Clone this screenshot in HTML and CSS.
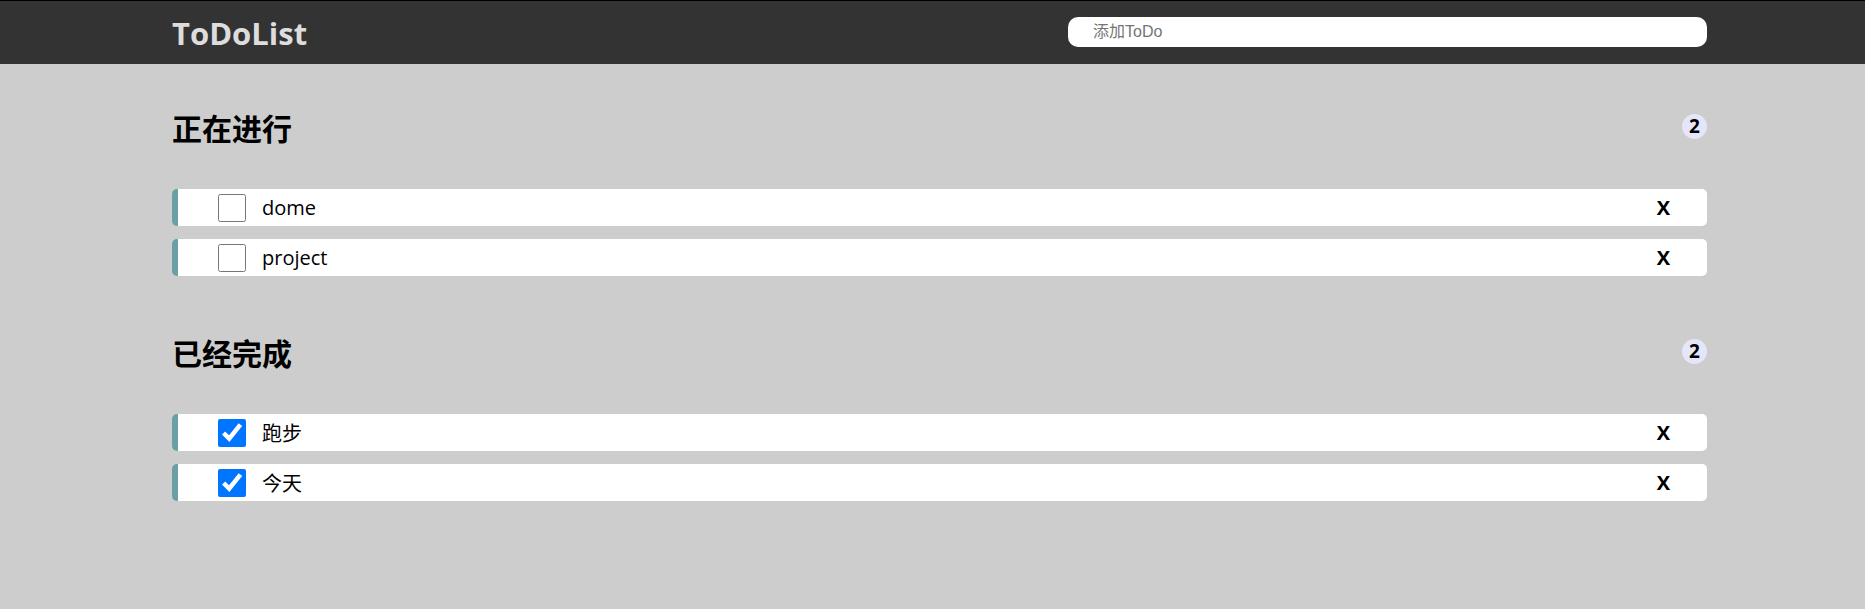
FILE: index.html
```html
<!DOCTYPE html>
<html lang="zh-CN">
<head>
<meta charset="utf-8">
<title>ToDoList</title>
<link rel="stylesheet" href="styles.css">
</head>
<body>
<header class="topbar">
  <div class="wrap topbar-inner">
    <div class="logo">ToDoList</div>
    <input class="add-input" type="text" placeholder="添加ToDo">
  </div>
</header>
<main class="wrap main">
  <section class="group">
    <div class="group-head">
      <h2 class="group-title">正在进行</h2>
      <span class="count">2</span>
    </div>
    <ul class="list">
      <li class="item"><input class="check" type="checkbox"><span class="item-text">dome</span><span class="remove">X</span></li>
      <li class="item"><input class="check" type="checkbox"><span class="item-text">project</span><span class="remove">X</span></li>
    </ul>
  </section>
  <section class="group group-done">
    <div class="group-head">
      <h2 class="group-title">已经完成</h2>
      <span class="count">2</span>
    </div>
    <ul class="list">
      <li class="item"><input class="check" type="checkbox" checked><span class="item-text">跑步</span><span class="remove">X</span></li>
      <li class="item"><input class="check" type="checkbox" checked><span class="item-text">今天</span><span class="remove">X</span></li>
    </ul>
  </section>
</main>
</body>
</html>
```

FILE: styles.css
```css
html, body {
  margin: 0;
  padding: 0;
}
body {
  background: #cdcdcd;
  font-family: "Open Sans", "Noto Sans CJK SC", sans-serif;
  color: #000;
  min-height: 609px;
}
.wrap {
  width: 1535px;
  margin-left: 172px;
}
.topbar {
  background: #333333;
  border-top: 1px solid #000;
  height: 63px;
}
.topbar-inner {
  height: 63px;
  display: flex;
  align-items: center;
}
.logo {
  font-family: "Open Sans", "Noto Sans CJK SC", sans-serif;
  font-weight: 700;
  font-size: 31px;
  color: #dddddd;
  line-height: 40px;
}
.add-input {
  margin-left: auto;
  margin-top: -1px;
  width: 639px;
  height: 30px;
  box-sizing: border-box;
  border: none;
  border-radius: 10px;
  background: #fff;
  padding: 0 0 0 25px;
  font-family: "Liberation Sans", "Noto Sans CJK SC", sans-serif;
  font-size: 16px;
  outline: none;
}
.add-input::placeholder {
  color: #757575;
}
.main {
  padding-top: 43px;
}
.group-done {
  margin-top: 56px;
}
.group-head {
  height: 40px;
  display: flex;
  align-items: center;
  justify-content: space-between;
}
.group-title {
  margin: 0;
  font-family: "Noto Sans CJK SC", sans-serif;
  font-weight: 700;
  font-size: 30px;
  line-height: 40px;
}
.count {
  width: 25px;
  height: 25px;
  margin-top: -1px;
  border-radius: 50%;
  background: #e6e6fa;
  display: flex;
  align-items: center;
  justify-content: center;
  font-weight: 700;
  font-size: 19px;
  line-height: 1;
}
.list {
  list-style: none;
  margin: 42px 0 0;
  padding: 0;
  display: flex;
  flex-direction: column;
  gap: 13px;
}
.item {
  height: 37px;
  box-sizing: border-box;
  background: #fff;
  border-left: 6px solid #6b9fa6;
  border-radius: 5px;
  display: flex;
  align-items: center;
  padding: 0 37px 0 40px;
}
.check {
  margin: 0;
  width: 28px;
  height: 28px;
  flex: none;
}
.item-text {
  margin-left: 16px;
  font-size: 20px;
  flex: 1;
}
.remove {
  font-weight: 700;
  font-size: 20px;
}
```
